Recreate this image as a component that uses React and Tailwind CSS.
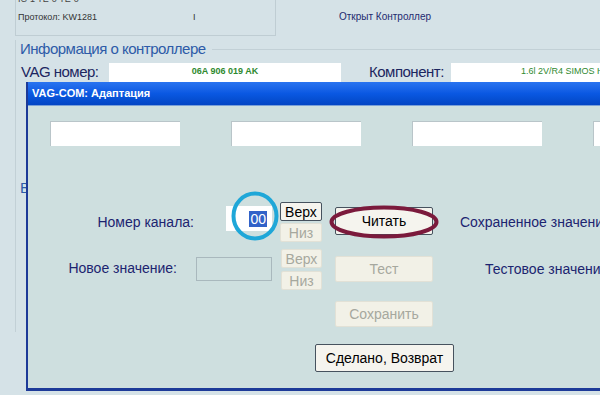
import React from "react";

const enabledBtn =
  "shrink-0 flex items-center justify-center bg-[#f5f4ee] border border-[#46525e] rounded-[2px] text-[14px] text-black leading-none";
const disabledBtn =
  "shrink-0 flex items-center justify-center bg-[#f2f1e7] border border-[#e2e1d6] rounded-[2px] text-[14px] text-[#a6a89e] leading-none";

export default function App() {
  return (
    <div className="relative w-[600px] h-[395px] overflow-hidden bg-[#d5e2e7] font-['Liberation_Sans',Arial,sans-serif]">
      {/* ===== MAIN VAG-COM WINDOW (background) ===== */}
      <div className="flex h-[40px]">
        <div className="shrink-0 ml-[15px] w-[261px] h-[36px] border-x border-b border-[#bfcdd3] px-[2px]">
          <div className="-mt-[6px] h-[11px] text-[9px] leading-[11px] text-[#444]">IC-1 TE-0 TE-0</div>
          <div className="mt-[7px] flex text-[9px] leading-[11px] text-[#333]">
            <span>Протокол: KW1281</span>
            <span className="ml-[96px]">I</span>
          </div>
        </div>
        <div className="ml-[63px] mt-[11px] text-[10px] leading-[12px] text-[#1e2a70]">Открыт Контроллер</div>
      </div>

      <div className="ml-[15px] h-[292px] border-l border-[#c2d0d6]">
        <div className="flex items-center h-[18px]">
          <span className="ml-[4px] text-[15px] tracking-[-0.5px] text-[#2d5ba8] leading-[18px]">Информация о контроллере</span>
          <div className="flex-1 ml-[6px] border-t border-[#c2d0d6]" />
        </div>
        <div className="flex items-center mt-[4px] h-[20px]">
          <span className="shrink-0 ml-[5px] w-[88px] text-[15px] tracking-[-0.5px] text-[#1c2660]">VAG номер:</span>
          <div className="shrink-0 w-[232px] h-[19px] bg-white flex items-center justify-center text-[9px] font-bold text-[#2f8a2f]">06A 906 019 AK</div>
          <span className="shrink-0 ml-[28px] w-[82px] text-[15px] tracking-[-0.5px] text-[#1c2660]">Компонент:</span>
          <div className="flex-1 h-[19px] bg-white flex items-center pl-[70px] text-[9px] text-[#2f8a2f] whitespace-nowrap overflow-hidden">1.6l 2V/R4 SIMOS H</div>
        </div>
        <div className="mt-[97px] ml-[4px] text-[15px] text-[#2d5ba8] leading-[18px]">Ввод</div>
      </div>

      {/* ===== ADAPTATION DIALOG ===== */}
      <div className="absolute left-[26px] top-[82px] w-[620px] h-[309px] flex flex-col border-l-2 border-b-[3px] border-[#1d3a98] bg-[#cedfdf]">
        <div className="h-[24px] flex items-center pl-[4px] bg-gradient-to-b from-[#2a74f0] via-[#0a58e2] to-[#0346c4] border-b border-[#7aa0d8]">
          <span className="font-bold text-[11px] text-white">VAG-COM: Адаптация</span>
        </div>

        <div className="flex flex-col">
          <div className="flex gap-[51px] pl-[22px] mt-[15px]">
            <div className="shrink-0 w-[130px] h-[25px] bg-white border-t border-l border-[#b9c5c9]" />
            <div className="shrink-0 w-[130px] h-[25px] bg-white border-t border-l border-[#b9c5c9]" />
            <div className="shrink-0 w-[130px] h-[25px] bg-white border-t border-l border-[#b9c5c9]" />
            <div className="shrink-0 w-[130px] h-[25px] bg-white border-t border-l border-[#b9c5c9]" />
          </div>

          {/* Channel row */}
          <div className="flex items-start mt-[56px] h-[40px] text-[14px] leading-[16px] text-[#1c2470] whitespace-nowrap">
            <span className="shrink-0 w-[166px] text-right mt-[12px]">Номер канала:</span>
            <div className="shrink-0 ml-[32px] mt-[4px] w-[46px] h-[25px] bg-white flex items-center justify-end pr-[5px]">
              <span className="bg-[#3162c8] text-white px-[1px]">00</span>
            </div>
            <div className="shrink-0 ml-[8px] w-[42px] flex flex-col gap-[2px]">
              <div className={`${enabledBtn} h-[19px]`}>Верх</div>
              <div className={`${disabledBtn} h-[19px]`}>Низ</div>
            </div>
            <div className={`${enabledBtn} ml-[13px] mt-[5px] w-[98px] h-[28px]`}>Читать</div>
            <span className="ml-[27px] mt-[12px]">Сохраненное значение</span>
          </div>

          {/* New value row */}
          <div className="flex items-start mt-[7px] h-[41px] text-[14px] leading-[16px] text-[#1c2470] whitespace-nowrap">
            <span className="shrink-0 w-[149px] text-right mt-[11px]">Новое значение:</span>
            <div className="shrink-0 ml-[19px] mt-[8px] w-[76px] h-[24px] border border-[#a9b8bd]" />
            <div className="shrink-0 ml-[9px] w-[41px] flex flex-col gap-[3px]">
              <div className={`${disabledBtn} h-[19px]`}>Верх</div>
              <div className={`${disabledBtn} h-[19px]`}>Низ</div>
            </div>
            <div className={`${disabledBtn} ml-[13px] mt-[7px] w-[98px] h-[26px]`}>Тест</div>
            <span className="ml-[52px] mt-[12px]">Тестовое значение</span>
          </div>

          <div className={`${disabledBtn} mt-[11px] ml-[307px] w-[98px] h-[26px]`}>Сохранить</div>
          <div className={`${enabledBtn} mt-[17px] ml-[287px] w-[139px] h-[28px]`}>Сделано, Возврат</div>
        </div>
      </div>

      {/* ===== ANNOTATIONS ===== */}
      <svg className="absolute left-[230px] top-[190px]" width="52" height="54" viewBox="0 0 52 54">
        <ellipse cx="25" cy="26" rx="21.5" ry="22.5" fill="none" stroke="#1fa7d8" strokeWidth="4" />
      </svg>
      <svg className="absolute left-[326px] top-[204px]" width="116" height="36" viewBox="0 0 116 36">
        <ellipse cx="58" cy="18" rx="52.5" ry="14.5" fill="none" stroke="#7b1a3c" strokeWidth="4" />
      </svg>
    </div>
  );
}
